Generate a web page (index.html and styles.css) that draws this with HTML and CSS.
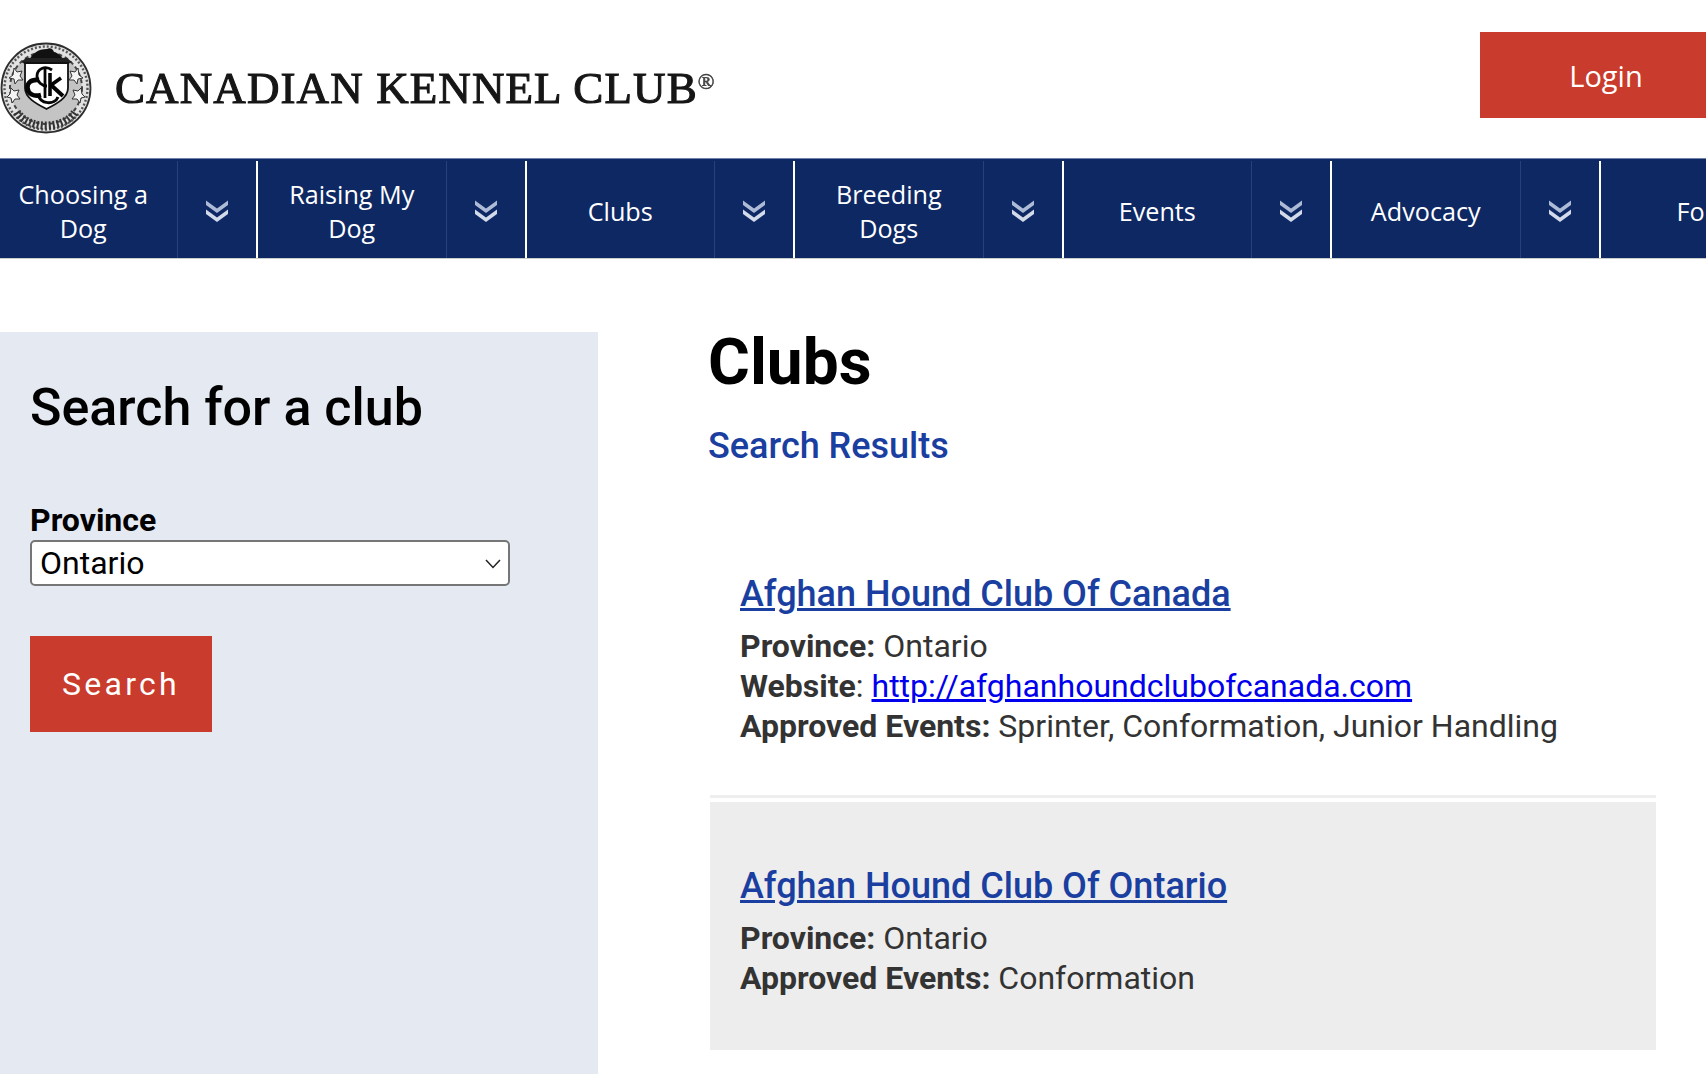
FILE: index.html
```html
<!DOCTYPE html>
<html lang="en">
<head>
<meta charset="utf-8">
<title>Clubs - Canadian Kennel Club</title>
<link rel="stylesheet" href="styles.css">
</head>
<body>
<svg class="sprite" width="0" height="0" aria-hidden="true">
  <symbol id="chev" viewBox="0 0 24 24">
    <path d="M1 1.500 12 9.500 23 1.500 23 6 12 14 1 6Z" fill="#aebbd6"/>
    <path d="M1 10.500 12 18.500 23 10.500 23 15 12 23 1 15Z" fill="#d3dbea"/>
  </symbol>
</svg>
<header class="top">
  <a class="brand" href="#">
    <svg class="seal" viewBox="0 0 92 92" width="92" height="92" aria-hidden="true">
      <circle cx="46" cy="46" r="44.500" fill="#e2e2e2" stroke="#2e2e2e" stroke-width="1.800"/>
      <circle cx="46" cy="46" r="41.500" fill="none" stroke="#555" stroke-width="2.400" stroke-dasharray="2 2"/>
      <circle cx="46" cy="46" r="36" fill="#c4c4c4" stroke="#444" stroke-width="2" stroke-dasharray="4 3"/>
      <g fill="#f4f4f4" stroke="#333" stroke-width="1">
        <path d="M14 26l3 4 5-1-2 5 3 4-5 0-3 4-1-5-5-1 4-3Z"/>
        <path d="M11 46l3 3 5-1-2 5 3 4-5 0-3 4-1-5-4-1 3-3Z"/>
        <path d="M78 26l-3 4-5-1 2 5-3 4 5 0 3 4 1-5 5-1-4-3Z"/>
        <path d="M81 46l-3 3-5-1 2 5-3 4 5 0 3 4 1-5 4-1-3-3Z"/>
      </g>
      <path d="M30 17C32 12 38 7 47 7 50 5 53 7 54 10 58 11 61 14 63 17Z" fill="#111"/>
      <path d="M21 20 26 16 67 16 72 20 68 22 25 22Z" fill="#222"/>
      <path d="M25 21H68V46C68 56 56 62 46.500 67 37 62 25 56 25 46Z" fill="#fff" stroke="#111" stroke-width="1.800"/>
      <g fill="none" stroke="#050505">
        <path d="M52 28C45 23 37 27 37 34 37 40 42 44 47 44" stroke-width="2.800"/>
        <path d="M39 38C30 37 27 42 27.500 46 28 52 34 55 41 53" stroke-width="4.600"/>
        <path d="M45 27 45 56" stroke-width="2.800"/>
        <path d="M50 31 50 54" stroke-width="3.600"/>
        <path d="M51 43 61 36" stroke-width="3.600"/>
        <path d="M51 43 63 54" stroke-width="4"/>
        <path d="M38 52C40 63 55 63 58 55" stroke-width="3"/>
      </g>
      <path d="M17 70C28 88 64 88 75 70" fill="none" stroke="#333" stroke-width="8" stroke-dasharray="2 2"/>
    </svg>
    <span class="wordmark">CANADIAN KENNEL CLUB<sup>®</sup></span>
  </a>
  <a class="login" href="#">Login</a>
</header>
<nav class="nav">
  <div class="nav-item"><a class="nav-link" href="#">Choosing a Dog</a><span class="nav-toggle"><svg class="chev"><use href="#chev"/></svg></span></div>
  <div class="nav-item"><a class="nav-link" href="#">Raising My Dog</a><span class="nav-toggle"><svg class="chev"><use href="#chev"/></svg></span></div>
  <div class="nav-item"><a class="nav-link" href="#">Clubs</a><span class="nav-toggle"><svg class="chev"><use href="#chev"/></svg></span></div>
  <div class="nav-item"><a class="nav-link" href="#">Breeding Dogs</a><span class="nav-toggle"><svg class="chev"><use href="#chev"/></svg></span></div>
  <div class="nav-item"><a class="nav-link" href="#">Events</a><span class="nav-toggle"><svg class="chev"><use href="#chev"/></svg></span></div>
  <div class="nav-item"><a class="nav-link" href="#">Advocacy</a><span class="nav-toggle"><svg class="chev"><use href="#chev"/></svg></span></div>
  <div class="nav-item"><a class="nav-link nav-link-last" href="#">For</a><span class="nav-toggle"><svg class="chev"><use href="#chev"/></svg></span></div>
</nav>
<main class="page">
  <aside class="side">
    <h2 class="side-title">Search for a club</h2>
    <label class="field-label" for="prov">Province</label>
    <div class="select-wrap">
      <select class="select" id="prov"><option>Ontario</option></select>
      <svg class="select-arrow" viewBox="0 0 16 10" width="16" height="10" aria-hidden="true"><path d="M1 1 8 8.500 15 1" fill="none" stroke="#222" stroke-width="1.500"/></svg>
    </div>
    <button class="search-btn" type="button">Search</button>
  </aside>
  <section class="content">
    <h1 class="title">Clubs</h1>
    <h3 class="subtitle">Search Results</h3>
    <article class="club">
      <h4 class="club-name"><a href="#">Afghan Hound Club Of Canada</a></h4>
      <p class="club-info"><b>Province:</b> Ontario<br><b>Website</b>: <a class="web" href="#">http://afghanhoundclubofcanada.com</a><br><b>Approved Events:</b> Sprinter, Conformation, Junior Handling</p>
    </article>
    <article class="club club-alt">
      <h4 class="club-name"><a href="#">Afghan Hound Club Of Ontario</a></h4>
      <p class="club-info"><b>Province:</b> Ontario<br><b>Approved Events:</b> Conformation</p>
    </article>
  </section>
</main>
</body>
</html>
```
FILE: styles.css
```css
* { box-sizing: border-box; }
html, body { margin: 0; height: 1074px; overflow: hidden; background: #fff; }
body { font-family: Roboto, "Liberation Sans", sans-serif; color: #000; width: 1706px; }
a { color: inherit; }
.sprite { position: absolute; }

.top { height: 158px; display: flex; justify-content: space-between; padding: 32px 0 0 0; overflow: hidden; }
.brand { display: flex; align-items: center; gap: 23px; height: 112px; text-decoration: none; color: #161616; }
.seal { filter: blur(.6px); flex: none; }
.wordmark { font-family: "Liberation Serif", serif; font-size: 45px; letter-spacing: 1.100px; font-weight: 400; -webkit-text-stroke: 1.100px #161616; filter: blur(.5px); white-space: nowrap; }
.wordmark sup { font-size: 22px; vertical-align: 14px; line-height: 0; letter-spacing: 0; color: #444; -webkit-text-stroke: .6px #444; }
.login { flex: none; width: 252px; height: 86px; margin-right: -26px; background: #c93b2c; color: #fff; font-family: "Open Sans", sans-serif; font-size: 29px; display: flex; align-items: center; justify-content: center; text-decoration: none; }

.nav { display: flex; height: 101px; background: #0e2864; border-top: 1px solid #6f84ad; border-bottom: 1px solid #c9cdc9; padding: 2px 0 0; margin-left: -10.500px; width: 1717px; overflow: hidden; }
.nav-item { flex: 0 0 268.500px; display: flex; border-right: 2px solid #fff; }
.nav-link { flex: 0 0 187.500px; padding: 3px 12px 0; display: flex; align-items: center; justify-content: center; text-align: center; color: #fff; text-decoration: none; font-family: "Open Sans", sans-serif; font-size: 25.200px; line-height: 34px; }
.nav-link-last { padding-left: 15px; }
.nav-toggle { flex: 1; border-left: 1px solid #27407f; display: flex; align-items: center; justify-content: center; padding-top: 3px; }
.chev { width: 26px; height: 24px; filter: blur(.5px); }

.page { display: flex; margin-top: 73px; height: 742px; }
.side { flex: 0 0 598px; background: #e5e9f2; padding: 46px 30px 0; }
.side-title { margin: 0; font-size: 52px; font-weight: 500; line-height: 60px; }
.field-label { display: block; margin-top: 64px; font-size: 32px; font-weight: 700; line-height: 36px; }
.select-wrap { position: relative; width: 480px; margin-top: 2px; }
.select { appearance: none; -webkit-appearance: none; display: block; width: 100%; height: 46px; border: 2px solid #767676; border-radius: 5px; background: #fff; font: 400 32px Roboto, sans-serif; color: #000; padding: 0 0 0 8px; }
.select-arrow { position: absolute; right: 9px; top: 19px; }
.search-btn { display: block; margin-top: 50px; width: 182px; height: 96px; border: 0; background: #c93b2c; color: #fff; font: 400 32px Roboto, sans-serif; letter-spacing: 3.300px; padding: 0; }

.content { flex: 0 0 948px; margin-left: 110px; }
.title { margin: 1px 0 0; font-size: 64px; font-weight: 700; line-height: 60px; }
.subtitle { margin: 29px 0 0; font-size: 36px; font-weight: 500; line-height: 48px; color: #1a3fa0; }
.club { padding: 100px 30px 49px; border-bottom: 3px solid #eee; margin-left: 2px; }
.club-name { margin: 0; font-size: 36px; font-weight: 500; line-height: 48px; color: #1a3fa0; }
.club-info { margin: 8px 0 0; font-size: 32px; line-height: 40px; color: #333; }
.club-info b { font-weight: 700; }
.web { color: #0000ee; }
.club-alt { background: #ededed; border-bottom: 0; margin-top: 4px; padding: 60px 30px 52px; }
```
